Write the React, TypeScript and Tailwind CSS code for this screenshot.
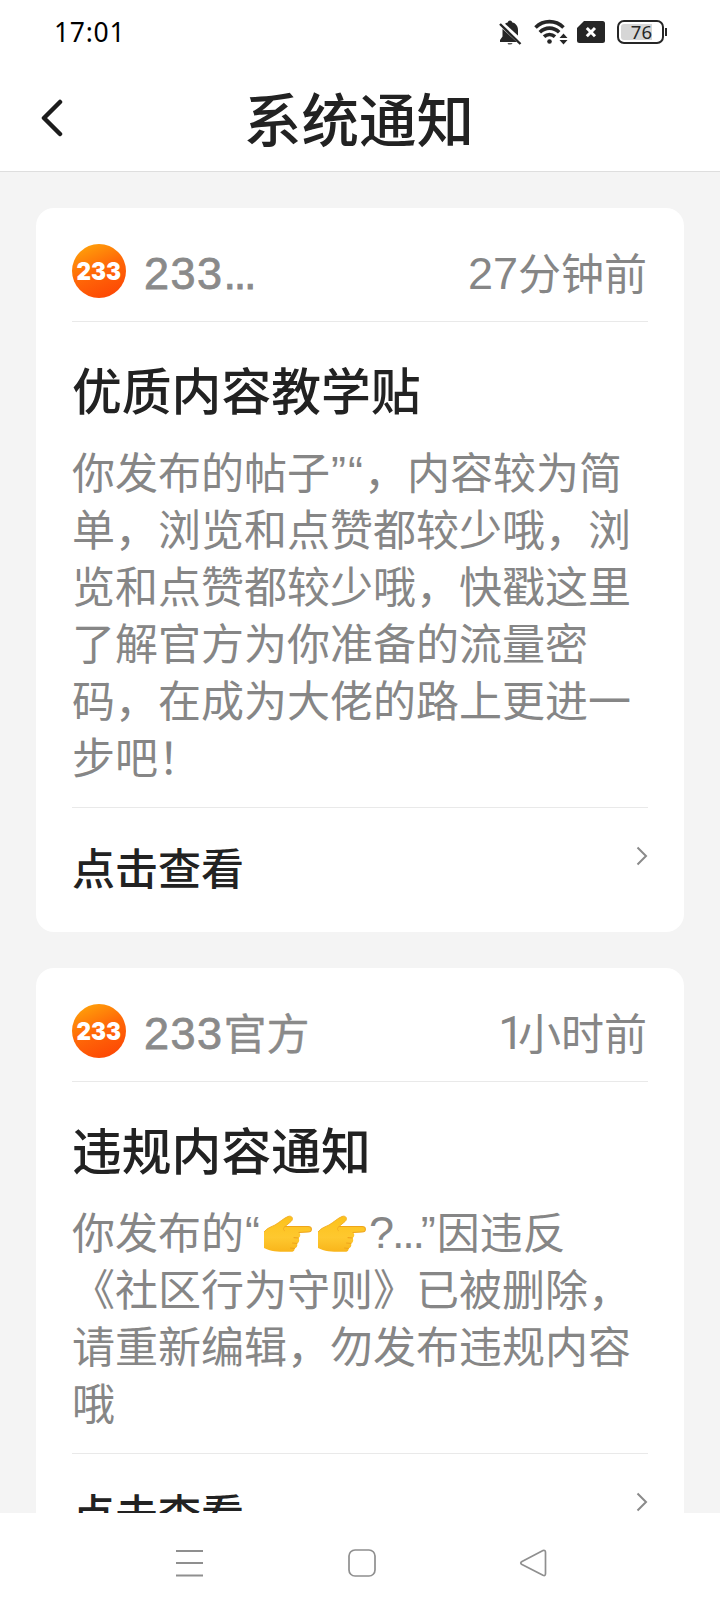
import React from 'react';

interface Notice {
  id: number;
  sender: React.ReactNode;
  time: React.ReactNode;
  title: string;
  lines: React.ReactNode[];
}

const Num = ({ children }: { children: React.ReactNode }) => (
  <span className="align-[1.5px] font-['Liberation_Sans',sans-serif] text-[45px] leading-none">{children}</span>
);

const Dots = () => (
  <span className="align-[1.5px] font-['Liberation_Sans',sans-serif] text-[45px] leading-none tracking-[-2.3px]">...</span>
);

const Quote = ({ children }: { children: React.ReactNode }) => (
  <span className="inline-block w-[17px] text-center align-[1px] font-['Liberation_Sans',sans-serif] text-[45px] leading-none">{children}</span>
);

const PointRight = () => (
  <svg role="img" aria-label="👉" className="inline-block h-[38px] w-[54px] align-[-4px]" viewBox="0 0 54 38">
    <defs>
      <linearGradient id="hand" x1="0" y1="0" x2="0" y2="1">
        <stop offset="0" stopColor="#fcc21b" />
        <stop offset="0.6" stopColor="#fec82f" />
        <stop offset="1" stopColor="#f9b51b" />
      </linearGradient>
    </defs>
    <path
      d="M3 17C6 13 10 12 14 10C19 7 23 3 27 1.5C31 0 33 4 30 6.5L24 11.500H47C51.500 11.500 51.500 17 47 17L38 17.500C40 19 39.500 22 37.500 23C39 25 38 28 36 28.500C37 31 35.500 33 33.500 33.500C34 36 32 37 29 36.800C22 37 10 37 3 33Z"
      fill="url(#hand)"
    />
    <path d="M24 11.500H47C51.500 11.500 51.500 17 47 17L38 17.500M37.500 23L33 22.600M36 28.500L31.500 28M33.500 33.500L29.500 33" fill="none" stroke="#efa51b" strokeWidth="1.100" strokeLinecap="round" />
    <path d="M3 17C6 13 10 12 14 10C19 7 23 3 27 1.500C31 0 33 4 30 6.500L24 11.500C22 13 22 15 24 16" fill="none" stroke="#f0aa20" strokeWidth="0.900" />
  </svg>
);

const notices: Notice[] = [
  {
    id: 1,
    sender: <><span className="tracking-[1.5px]"><Num>233</Num></span><Dots /></>,
    time: <><Num>27</Num>分钟前</>,
    title: '优质内容教学贴',
    lines: [
      <>你发布的帖子<Quote>”</Quote><Quote>“</Quote>，内容较为简</>,
      '单，浏览和点赞都较少哦，浏',
      '览和点赞都较少哦，快戳这里',
      '了解官方为你准备的流量密',
      '码，在成为大佬的路上更进一',
      '步吧！',
    ],
  },
  {
    id: 2,
    sender: <><span className="tracking-[1.5px]"><Num>233</Num></span><span className="[-webkit-text-stroke:0.4px_#8a8a8a]">官方</span></>,
    time: <><span className="-mr-[6px] align-[1.5px] font-['Roboto',sans-serif] text-[46px] leading-none">1</span>小时前</>,
    title: '违规内容通知',
    lines: [
      <>你发布的<Quote>“</Quote><PointRight /><PointRight /><span className="-mr-[2px]"><Num>?</Num></span><span className="-mr-[3px]"><Dots /></span><Quote>”</Quote>因违反</>,
      '《社区行为守则》已被删除，',
      '请重新编辑，勿发布违规内容',
      '哦',
    ],
  },
];

const Avatar = () => (
  <svg className="size-[54px] shrink-0" viewBox="0 0 54 54">
    <defs>
      <linearGradient id="avatar" x1="0.15" y1="0" x2="0.6" y2="1">
        <stop offset="0" stopColor="#ffa60a" />
        <stop offset="0.5" stopColor="#ff6a08" />
        <stop offset="1" stopColor="#fd4a05" />
      </linearGradient>
    </defs>
    <circle cx="27" cy="27" r="27" fill="url(#avatar)" />
    <text x="4.500" y="35.800" fill="#fff" fontFamily="Inter, sans-serif" fontWeight="900" fontSize="24.500" textLength="44.500" lengthAdjust="spacingAndGlyphs">
      233
    </text>
  </svg>
);

const StatusBar = () => (
  <div className="flex h-[66px] items-center justify-between pl-[54px] pr-[53px]">
    <span className="-mt-[2px] font-['Noto_Sans',sans-serif] text-[26.500px] leading-none tracking-[0.7px] text-black">17:01</span>
    <div className="-mt-[2px] flex items-center text-[#262626]">
      <svg className="h-[28px] w-[26px]" viewBox="0 0 26 28" fill="currentColor">
        <path d="M12 2.500c1.200 0 2 .8 2 1.800 4 1 6 4 6 8v6.200l3 3.500v2H2v-2l2.500-3.500V12c0-4 2-6.700 5.500-7.700 0-1 .8-1.800 2-1.800ZM9.500 25.200h5c-.5 1.600-4.500 1.600-5 0Z" />
        <path d="M1.500 4.500L24 25" stroke="#fff" strokeWidth="5.500" />
        <path d="M2 6L22.500 26" stroke="currentColor" strokeWidth="2.400" />
      </svg>
      <svg className="ml-[9px] h-[28px] w-[36px]" viewBox="0 0 36 28" fill="none">
        <path d="M2.500 9.500C10.500 1.700 22.500 1.700 30.500 9.500M6.800 14.200C12.500 8.700 20.500 8.700 26.200 14.200M11 18.700C14.300 15.800 18.700 15.800 22 18.700" stroke="currentColor" strokeWidth="3.600" />
        <circle cx="16.500" cy="23.500" r="2.300" fill="currentColor" />
        <path d="M30.500 15.500L34.500 20H26.500ZM30.500 26.500L34.500 22H26.500Z" fill="currentColor" />
      </svg>
      <svg className="ml-[8px] h-[22px] w-[28px]" viewBox="0 0 28 22">
        <path d="M7 0H25.500Q28 0 28 2.500V19.500Q28 22 25.500 22H2.500Q0 22 0 19.500V7Z" fill="currentColor" />
        <path d="M9.800 7L18 15.200M18 7L9.800 15.200" stroke="#fff" strokeWidth="3" />
      </svg>
      <div className="ml-[12px] flex items-center">
        <div className="flex h-[24px] w-[47px] items-center rounded-[7px] border-2 border-current p-[2px]">
          <div className="flex h-full w-[31px] items-center justify-end rounded-l-[3px] bg-[#d6d6d6] font-['Noto_Sans',sans-serif] text-[18.500px] leading-none">
            76
          </div>
        </div>
        <div className="ml-px h-2 w-[2px] bg-current" />
      </div>
    </div>
  </div>
);

const NoticeCard: React.FC<{ notice: Notice }> = ({ notice }) => (
  <article className="rounded-[18px] bg-white px-9 pt-9">
    <div className="flex h-[78px] items-start justify-between border-b border-[#e9e9e9]">
      <div className="flex">
        <Avatar />
        <span className="-mt-[3px] ml-[18px] leading-[60px] text-[#8a8a8a] [-webkit-text-stroke:0.8px_#8a8a8a]">{notice.sender}</span>
      </div>
      <span className="-mt-[3px] mr-[1px] leading-[60px] text-[#868686]">{notice.time}</span>
    </div>
    <h2 className="mt-[36px] text-[49.800px] leading-[60px] font-medium text-[#222]">{notice.title}</h2>
    <div className="mt-[24px] mb-[23px] text-[#868686]">
      {notice.lines.map((line, i) => (
        <p key={i} className="h-[57px] leading-[57px]">{line}</p>
      ))}
    </div>
    <div className="flex h-[125px] justify-between border-t border-[#e9e9e9]">
      <span className="mt-[28px] leading-[60px] font-medium text-[#222]">点击查看</span>
      <svg className="mt-[38px] h-5 w-3" viewBox="0 0 12 20" fill="none" stroke="#8a8a8a" strokeWidth="2">
        <path d="M1.500 1.500L10 10L1.500 18.500" />
      </svg>
    </div>
  </article>
);

const App: React.FC = () => {
  return (
    <div className="flex h-[1612px] w-[720px] flex-col overflow-hidden bg-[#f4f4f4] font-['Noto_Sans_CJK_SC',sans-serif] text-[43px] whitespace-nowrap">
      <header className="h-[172px] shrink-0 border-b border-[#dedede] bg-white">
        <StatusBar />
        <div className="grid h-[104px] grid-cols-[100px_1fr_100px] items-center">
          <button className="ml-10">
            <svg className="h-[38px] w-6" viewBox="0 0 24 38" fill="none" stroke="#1c1c1c" strokeWidth="4.500" strokeLinecap="round" strokeLinejoin="round">
              <path d="M20 3L4 19L20 35" />
            </svg>
          </button>
          <h1 className="-mt-[2px] mr-[2px] text-center text-[57.500px] leading-[80px] font-medium text-[#222]">系统通知</h1>
        </div>
      </header>

      <main className="flex min-h-0 flex-1 flex-col gap-9 overflow-hidden px-9 pt-9">
        {notices.map((notice) => (
          <NoticeCard key={notice.id} notice={notice} />
        ))}
      </main>

      <nav className="flex h-[99px] shrink-0 items-center justify-between bg-white pr-[173px] pl-[175px]">
        <svg className="h-7 w-[29px]" viewBox="0 0 29 28" stroke="#8f8f8f" strokeWidth="2">
          <path d="M1 2H28M1 14H28M1 26.500H28" />
        </svg>
        <svg className="h-7 w-7" viewBox="0 0 28 28" fill="none" stroke="#8f8f8f" strokeWidth="1.700">
          <rect x="1" y="1" width="26" height="26" rx="6" />
        </svg>
        <svg className="h-7 w-7" viewBox="0 0 28 28" fill="none" stroke="#8f8f8f" strokeWidth="1.700" strokeLinejoin="round">
          <path d="M24 1.500Q26.500 .7 26.500 3.500V24.500Q26.500 27.300 24 26.300L3 15.500Q.5 14 3 12.500Z" />
        </svg>
      </nav>
    </div>
  );
};

export default App;
